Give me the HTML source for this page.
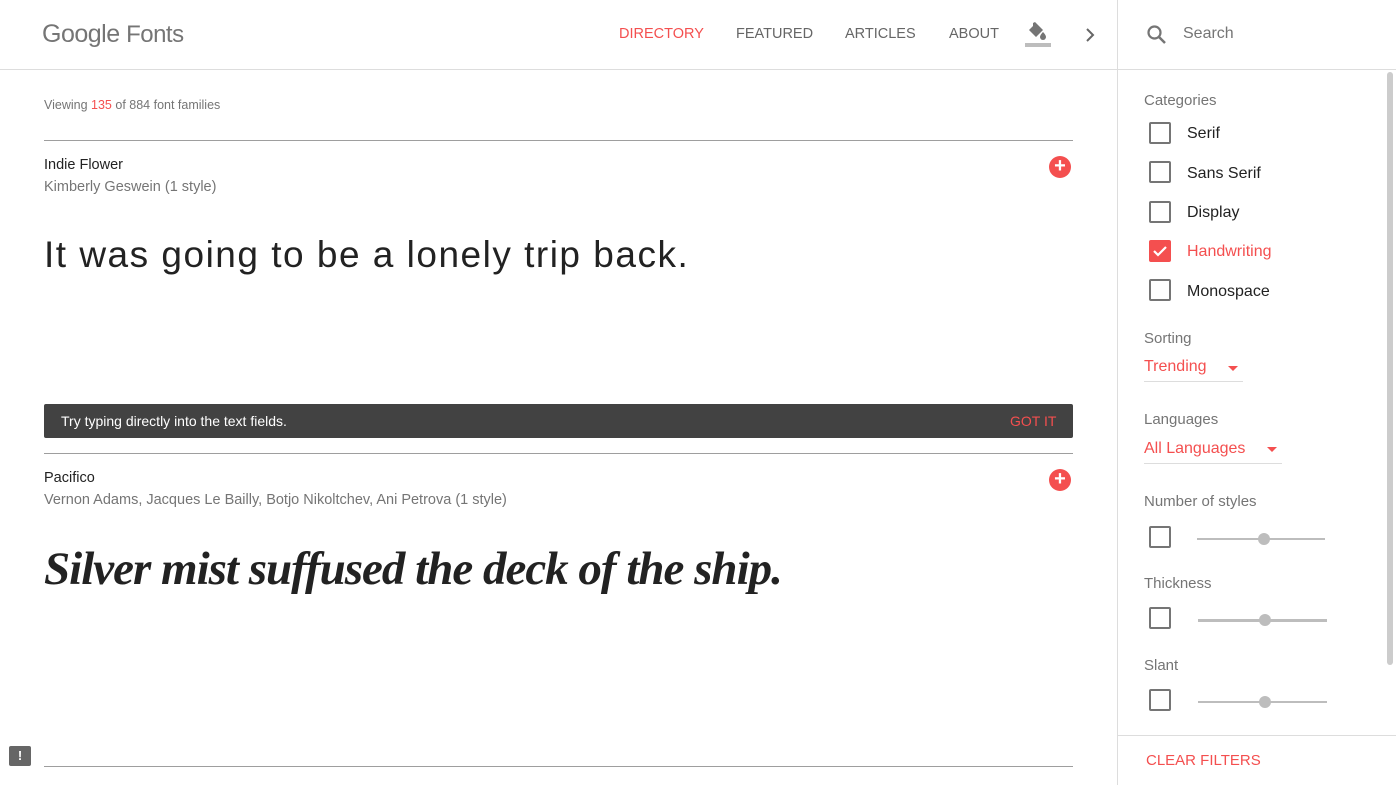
<!DOCTYPE html><html><head><style>
*{box-sizing:border-box;margin:0;padding:0}
body{width:1396px;height:785px;overflow:hidden;background:#fff;font-family:"Liberation Sans",sans-serif;position:relative;color:#222}
.a{position:absolute}
.nav{font-size:14.5px;color:#666;top:26px}
.cb{position:absolute;left:1149px;width:22px;height:22px;border:2px solid #757575;border-radius:2px}
.lbl{position:absolute;left:1187px;font-size:16px;color:#222}
.h{position:absolute;left:1144px;font-size:15px;color:#757575}
.sl{position:absolute;height:2px;background:#bdbdbd}
.dot{position:absolute;width:12px;height:12px;border-radius:50%;background:#bdbdbd}
.plus{position:absolute;left:1049px;width:22px;height:22px;border-radius:50%;background:#f44f4f;color:#fff;font-size:20px;line-height:21px;text-align:center;font-weight:bold}
.hr{position:absolute;left:44px;width:1029px;height:1px;background:#9e9e9e}
</style></head><body>
<div class="a" style="left:42px;top:20px;font-size:25px;color:#757575;letter-spacing:-0.5px">Google <span style="font-size:24px">Fonts</span></div>
<div class="a nav" style="left:619px;color:#f44f4f">DIRECTORY</div>
<div class="a nav" style="left:736px">FEATURED</div>
<div class="a nav" style="left:845px">ARTICLES</div>
<div class="a nav" style="left:949px">ABOUT</div>
<svg class="a" style="left:1024px;top:20px" width="28" height="28" viewBox="0 0 28 28"><path d="M9 3l2-1 8 8-7 7-7-7 4-4z" fill="#757575"/><path d="M19 12c0 0 3 3 3 5a3 3 0 0 1-6 0c0-2 3-5 3-5z" fill="#757575"/><rect x="1" y="23" width="26" height="4" fill="#bdbdbd"/></svg>
<svg class="a" style="left:1082px;top:26px" width="16" height="18"><path d="M5 3l6 6-6 6" stroke="#666" stroke-width="2" fill="none"/></svg>
<div class="a" style="left:1117px;top:0;width:1px;height:785px;background:#ddd"></div>
<div class="a" style="left:0;top:69px;width:1396px;height:1px;background:#ddd"></div>
<svg class="a" style="left:1146px;top:24px" width="22" height="22" viewBox="0 0 22 22"><circle cx="8.5" cy="8.5" r="6" stroke="#757575" stroke-width="2.2" fill="none"/><path d="M13 13l6 6" stroke="#757575" stroke-width="2.5"/></svg>
<div class="a" style="left:1183px;top:25px;font-size:16px;color:#757575">Search</div>
<div class="a" style="left:1387px;top:72px;width:6px;height:593px;background:#ccc;border-radius:3px"></div>

<div class="a" style="left:44px;top:98px;font-size:12.5px;color:#757575">Viewing <span style="color:#f44f4f">135</span> of 884 font families</div>
<div class="hr" style="top:140px"></div>
<div class="a" style="left:44px;top:157px;font-size:14.5px;color:#222">Indie Flower</div>
<div class="a" style="left:44px;top:179px;font-size:14.5px;color:#757575">Kimberly Geswein (1 style)</div>
<div class="plus" style="top:156px">+</div>
<div class="a" style="left:44px;top:234px;font-size:37px;color:#222;letter-spacing:1.5px">It was going to be a lonely trip back.</div>
<div class="a" style="left:44px;top:404px;width:1029px;height:34px;background:#424242;border-radius:2px"></div>
<div class="a" style="left:61px;top:413px;font-size:14px;color:#fff">Try typing directly into the text fields.</div>
<div class="a" style="left:1010px;top:413px;font-size:14px;color:#f44f4f">GOT IT</div>
<div class="hr" style="top:453px"></div>
<div class="a" style="left:44px;top:470px;font-size:14.5px;color:#222">Pacifico</div>
<div class="a" style="left:44px;top:492px;font-size:14.5px;color:#757575">Vernon Adams, Jacques Le Bailly, Botjo Nikoltchev, Ani Petrova (1 style)</div>
<div class="plus" style="top:469px">+</div>
<div class="a" style="left:44px;top:542px;font-size:47px;color:#222;font-family:'Liberation Serif',serif;font-style:italic;font-weight:bold;letter-spacing:-1px">Silver mist suffused the deck of the ship.</div>
<div class="hr" style="top:766px"></div>
<div class="a" style="left:9px;top:746px;width:22px;height:20px;background:#666;border-radius:2px;color:#fff;font-size:13px;text-align:center;font-weight:bold;line-height:19px">!</div>

<div class="h" style="top:92px">Categories</div>
<div class="cb" style="top:122px"></div><div class="lbl" style="top:125px">Serif</div>
<div class="cb" style="top:161px"></div><div class="lbl" style="top:165px">Sans Serif</div>
<div class="cb" style="top:201px"></div><div class="lbl" style="top:204px">Display</div>
<div class="cb" style="top:240px;background:#f44f4f;border-color:#f44f4f"><svg width="18" height="18" style="position:absolute;left:0;top:0"><path d="M3 9l4 4 8-8" stroke="#fff" stroke-width="2.2" fill="none"/></svg></div><div class="lbl" style="top:243px;color:#f44f4f">Handwriting</div>
<div class="cb" style="top:279px"></div><div class="lbl" style="top:283px">Monospace</div>
<div class="h" style="top:330px">Sorting</div>
<div class="a" style="left:1144px;top:358px;font-size:16px;color:#f44f4f">Trending</div>
<div class="a" style="left:1228px;top:366px;border:5px solid transparent;border-top:5px solid #f44f4f"></div>
<div class="a" style="left:1144px;top:381px;width:99px;height:1px;background:#ddd"></div>
<div class="h" style="top:411px">Languages</div>
<div class="a" style="left:1144px;top:440px;font-size:16px;color:#f44f4f">All Languages</div>
<div class="a" style="left:1267px;top:447px;border:5px solid transparent;border-top:5px solid #f44f4f"></div>
<div class="a" style="left:1144px;top:463px;width:138px;height:1px;background:#ddd"></div>
<div class="h" style="top:493px">Number of styles</div>
<div class="cb" style="top:526px"></div>
<div class="sl" style="left:1197px;top:538px;width:128px"></div><div class="dot" style="left:1258px;top:533px"></div>
<div class="h" style="top:575px">Thickness</div>
<div class="cb" style="top:607px"></div>
<div class="sl" style="left:1198px;top:619px;width:129px;height:3px"></div><div class="dot" style="left:1259px;top:614px"></div>
<div class="h" style="top:657px">Slant</div>
<div class="cb" style="top:689px"></div>
<div class="sl" style="left:1198px;top:701px;width:129px"></div><div class="dot" style="left:1259px;top:696px"></div>
<div class="a" style="left:1118px;top:735px;width:278px;height:1px;background:#ddd"></div>
<div class="a" style="left:1146px;top:752px;font-size:15px;color:#f44f4f">CLEAR FILTERS</div>
</body></html>
